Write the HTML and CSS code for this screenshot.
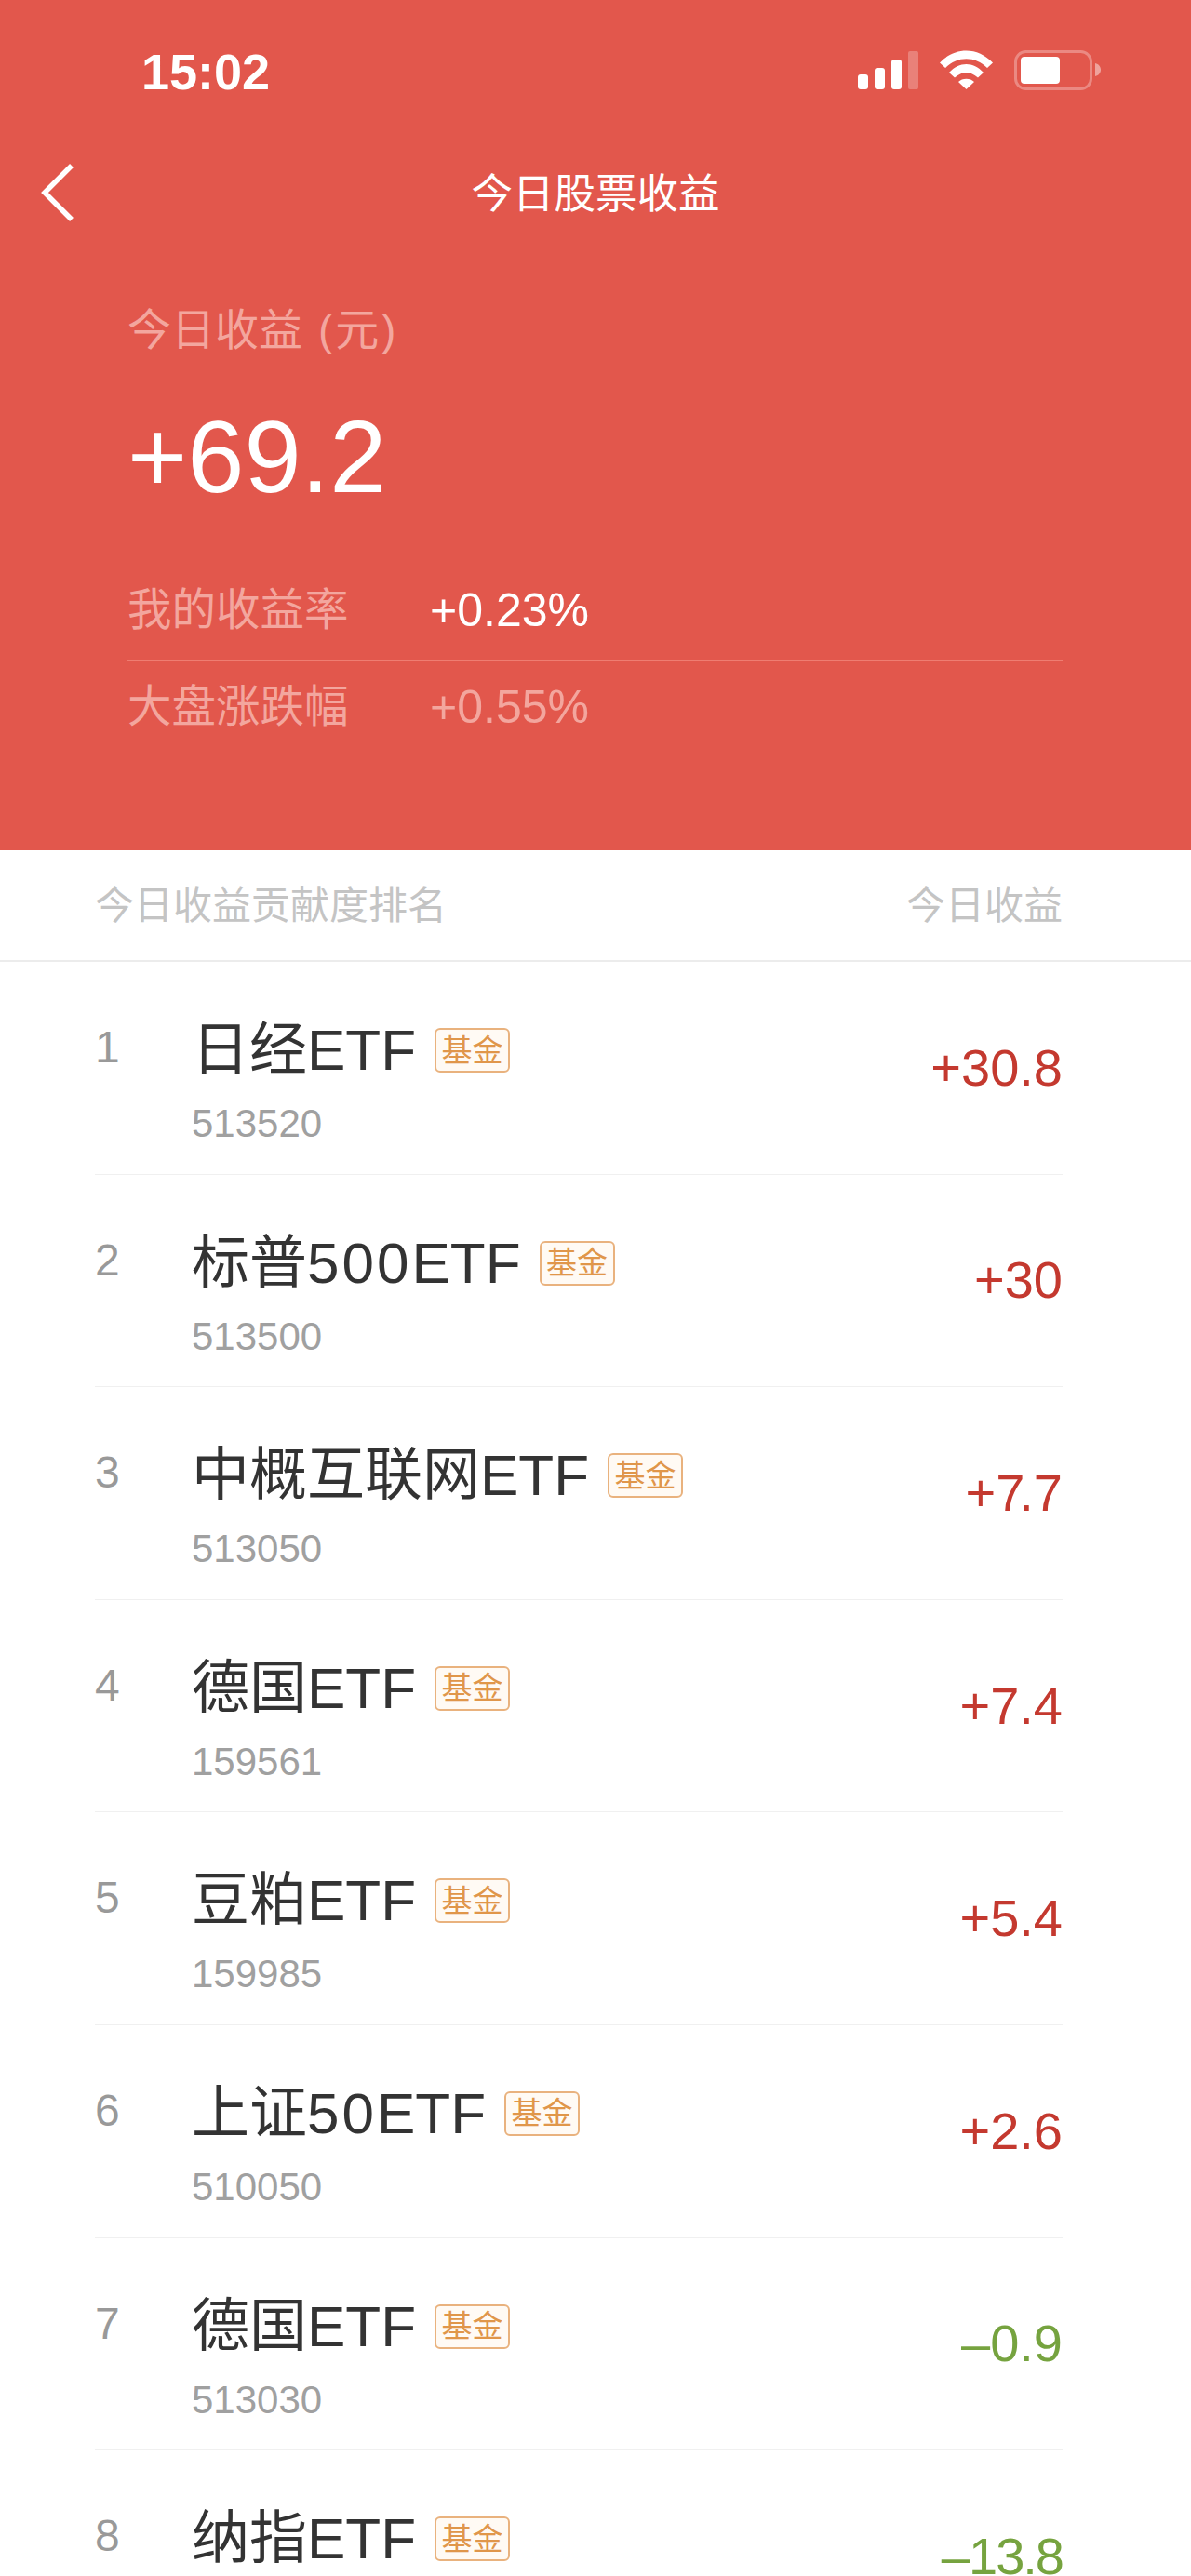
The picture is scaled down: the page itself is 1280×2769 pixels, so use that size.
FILE: index.html
```html
<!DOCTYPE html>
<html lang="zh-CN">
<head>
  <meta charset="UTF-8">
  <meta name="viewport" content="width=device-width, initial-scale=1.0">
  <title>今日股票收益</title>
  <link rel="stylesheet" href="styles.css">
</head>
<body>
  <div class="page">
    <header class="hero">
      <div class="status-bar">
        <span class="time">15:02</span>
        <svg class="status-icons" viewBox="922 54 261 43" width="261" height="43" fill="#fff">
          <rect x="922" y="80" width="11" height="16" rx="3"/>
          <rect x="940" y="73" width="11" height="23" rx="3"/>
          <rect x="958" y="64" width="11" height="32" rx="3"/>
          <rect x="976" y="55" width="11" height="41" rx="2" opacity="0.25"/>
          <path d="M1010 67.500C1026 50 1051 50 1067 67.500L1061 73C1048 60 1029 60 1016 73Z"/>
          <path d="M1020 78C1031 66 1046 66 1057 78L1051 83.500C1043 76 1034 76 1026 83.500Z"/>
          <path d="M1030 88C1034 83.500 1043 83.500 1047 88L1038.500 96Z"/>
          <rect x="1091.500" y="55.500" width="81" height="40" rx="11" fill="none" stroke="#fff" stroke-width="3" opacity="0.3"/>
          <rect x="1097" y="61" width="42" height="29" rx="4"/>
          <path d="M1177 68C1181 69 1183 72 1183 75C1183 78 1181 81 1177 82Z" opacity="0.45"/>
        </svg>
      </div>

      <nav class="nav-bar">
        <svg class="back-icon" viewBox="0 0 40 64" width="40" height="64" fill="none" stroke="#fff" stroke-width="5.500">
          <path d="M36 3L7 32L36 61"/>
        </svg>
        <h1 class="nav-title">今日股票收益</h1>
      </nav>

      <section class="summary">
        <div class="summary-label">今日收益 <span class="unit">(元)</span></div>
        <div class="summary-amount">+69.2</div>
        <div class="stat stat-first">
          <span class="stat-label">我的收益率</span>
          <span class="stat-value">+0.23%</span>
        </div>
        <div class="stat">
          <span class="stat-label">大盘涨跌幅</span>
          <span class="stat-value muted">+0.55%</span>
        </div>
      </section>
    </header>

    <div class="table-head">
      <span>今日收益贡献度排名</span>
      <span>今日收益</span>
    </div>

    <ul class="rank-list">
      <li class="rank-row">
        <span class="rank">1</span>
        <div class="fund">
          <div class="fund-name">日经ETF<span class="tag">基金</span></div>
          <div class="fund-code">513520</div>
        </div>
        <span class="gain up">+30.8</span>
      </li>
      <li class="rank-row">
        <span class="rank">2</span>
        <div class="fund">
          <div class="fund-name">标普<span class="digits">500</span>ETF<span class="tag">基金</span></div>
          <div class="fund-code">513500</div>
        </div>
        <span class="gain up">+30</span>
      </li>
      <li class="rank-row">
        <span class="rank">3</span>
        <div class="fund">
          <div class="fund-name">中概互联网ETF<span class="tag">基金</span></div>
          <div class="fund-code">513050</div>
        </div>
        <span class="gain up">+<span class="tight">7</span>.7</span>
      </li>
      <li class="rank-row">
        <span class="rank">4</span>
        <div class="fund">
          <div class="fund-name">德国ETF<span class="tag">基金</span></div>
          <div class="fund-code">159561</div>
        </div>
        <span class="gain up">+7.4</span>
      </li>
      <li class="rank-row">
        <span class="rank">5</span>
        <div class="fund">
          <div class="fund-name">豆粕ETF<span class="tag">基金</span></div>
          <div class="fund-code">159985</div>
        </div>
        <span class="gain up">+5.4</span>
      </li>
      <li class="rank-row">
        <span class="rank">6</span>
        <div class="fund">
          <div class="fund-name">上证<span class="digits">50</span>ETF<span class="tag">基金</span></div>
          <div class="fund-code">510050</div>
        </div>
        <span class="gain up">+2.6</span>
      </li>
      <li class="rank-row">
        <span class="rank">7</span>
        <div class="fund">
          <div class="fund-name">德国ETF<span class="tag">基金</span></div>
          <div class="fund-code">513030</div>
        </div>
        <span class="gain down">–0.9</span>
      </li>
      <li class="rank-row">
        <span class="rank">8</span>
        <div class="fund">
          <div class="fund-name">纳指ETF<span class="tag">基金</span></div>
        </div>
        <span class="gain down last-gain">–13.8</span>
      </li>
    </ul>
  </div>
</body>
</html>
```

FILE: styles.css
```css
* {
  box-sizing: border-box;
}

body {
  margin: 0;
  background: #fff;
  font-family: "Liberation Sans", "Noto Sans CJK SC", sans-serif;
}

.page {
  height: 100vh;
  overflow: hidden;
}

/* red top section */
.hero {
  height: 914px;
  background: #e2574c;
  color: #fff;
}

.status-bar {
  height: 150px;
  padding: 54px 97px 0 152px;
  display: flex;
  justify-content: space-between;
  align-items: flex-start;
}

.time {
  font-size: 54px;
  font-weight: bold;
  line-height: 46px;
}

.nav-bar {
  height: 114px;
  padding-left: 41px;
  display: flex;
  align-items: center;
  position: relative;
}

.nav-title {
  position: absolute;
  left: 0;
  right: 0;
  top: 29px;
  margin: 0;
  text-align: center;
  font-size: 44.500px;
  font-weight: normal;
  line-height: 60px;
}

.summary {
  padding: 61px 138px 0 137px;
}

.summary-label {
  font-size: 47px;
  line-height: 60px;
  color: #f3a69e;
}

.unit {
  margin-left: 4px;
  letter-spacing: 2.500px;
}

.summary-amount {
  margin-top: 41px;
  font-size: 110px;
  line-height: 130px;
}

.stat {
  display: flex;
  line-height: 100px;
}

.stat-first {
  margin-top: 50px;
  padding-bottom: 3px;
  border-bottom: 1px solid #ef7d72;
}

.stat-label {
  width: 325px;
  font-size: 47.500px;
  color: #f3a69e;
}

.stat-value {
  font-size: 50px;
}

.stat-value.muted {
  color: #f3a69e;
}

/* ranking table */
.table-head {
  height: 120px;
  padding: 0 138px 8px 102px;
  display: flex;
  justify-content: space-between;
  align-items: center;
  border-bottom: 2px solid #ececec;
  font-size: 42px;
  color: #c4c4c4;
}

.rank-list {
  list-style: none;
  margin: 0;
  padding: 0;
}

.rank-row {
  height: 228.600px;
  margin: 0 138px 0 102px;
  display: flex;
  align-items: center;
  border-bottom: 1px solid #f0f0f0;
}

.rank {
  width: 104px;
  align-self: flex-start;
  padding-top: 62px;
  font-size: 48px;
  line-height: 60px;
  color: #999;
}

.fund {
  flex: 1;
  align-self: flex-start;
  padding-top: 65px;
}

.fund-name {
  display: flex;
  align-items: center;
  font-size: 62px;
  line-height: 60px;
  color: #333;
}

.digits {
  letter-spacing: 3px;
}

.tag {
  width: 81px;
  height: 48px;
  margin-left: 20px;
  display: flex;
  align-items: center;
  justify-content: center;
  border: 2px solid #e9b27e;
  border-radius: 6px;
  background: #fffaf4;
  font-size: 33px;
  line-height: 1;
  color: #e0964a;
}

.fund-code {
  margin-top: 24px;
  font-size: 42px;
  line-height: 50px;
  color: #a0a0a0;
}

.gain {
  font-size: 56px;
  line-height: 40px;
}

.gain.up {
  color: #c4392f;
}

.gain.down {
  color: #76a33f;
}

.last-gain {
  letter-spacing: -2px;
}

.tight {
  letter-spacing: -6px;
}
```
